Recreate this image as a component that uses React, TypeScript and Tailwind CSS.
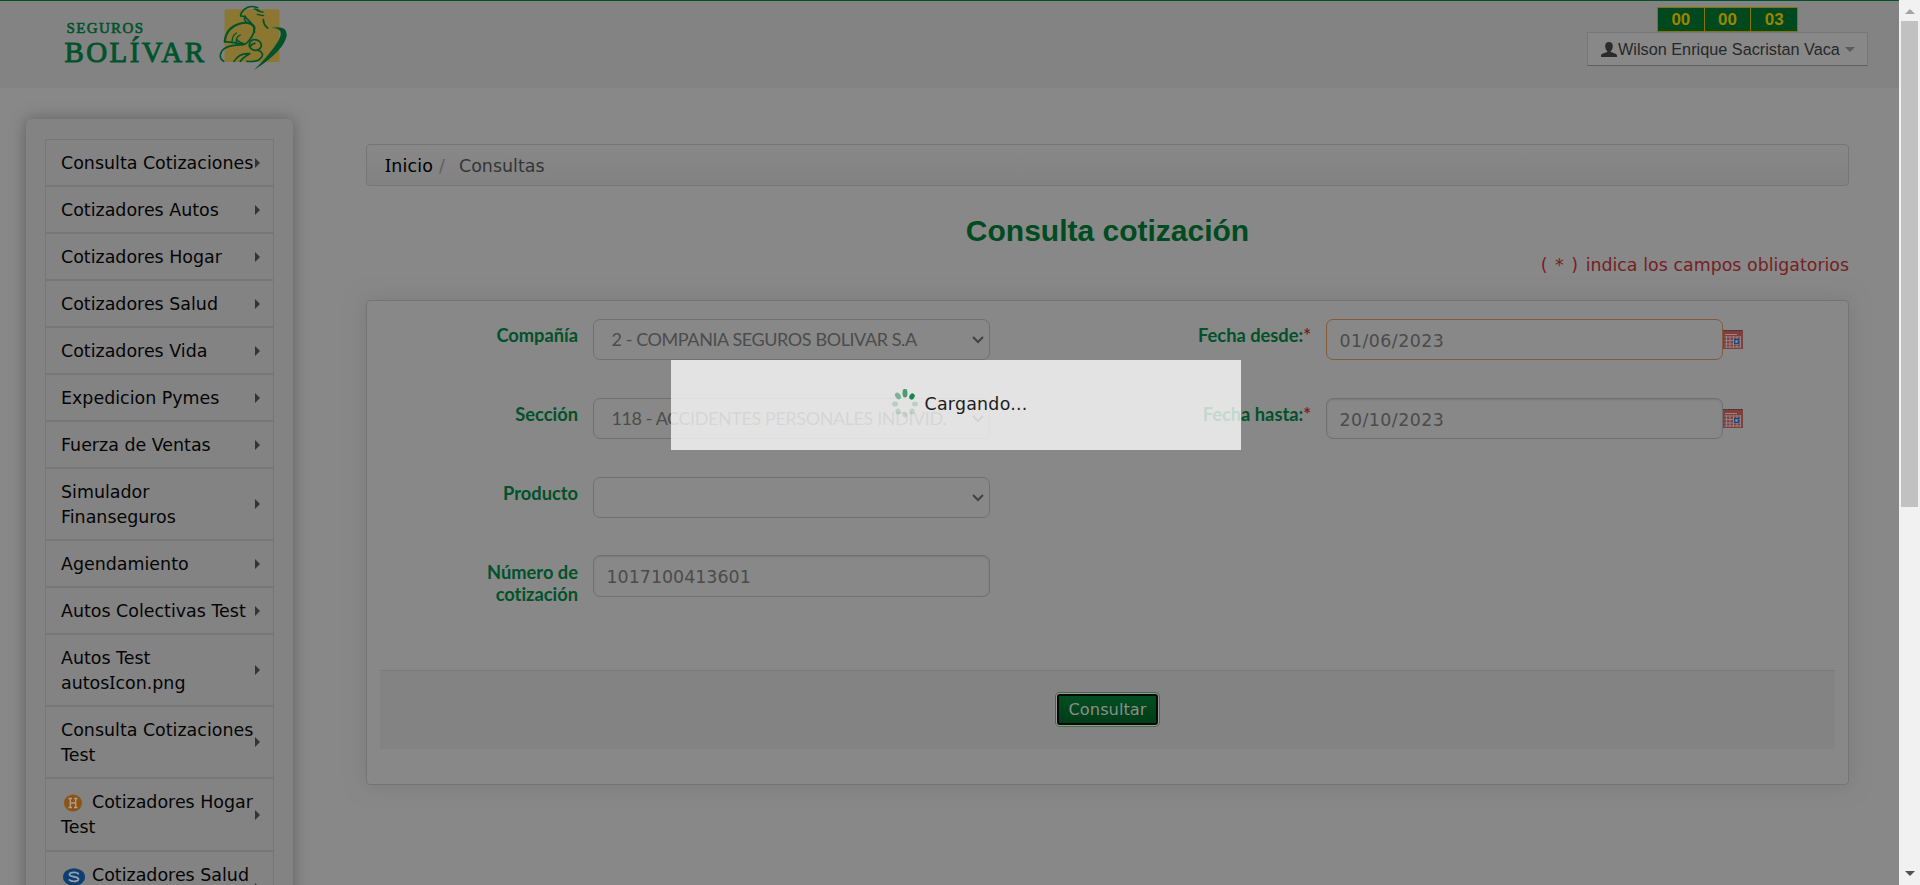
import React from 'react';

const SANS = "font-['DejaVu_Sans','Noto_Sans',sans-serif]";
const ARIAL = "font-['Liberation_Sans',Arial,sans-serif]";
const LATO = "font-['Lato',sans-serif]";

function CapitalI() {
  return <span className="font-['Noto_Sans',sans-serif] text-[18px] leading-none">I</span>;
}

function Logo() {
  return (
    <svg className="block" width="240" height="76" viewBox="0 0 240 76">
      <g fill="#00532b" stroke="#00532b" fontFamily="'Liberation Serif', serif">
        <text x="6.5" y="33.2" fontSize="15" strokeWidth="0.6" textLength="76.500" lengthAdjust="spacing">SEGUROS</text>
        <text x="4.5" y="62" fontSize="29" strokeWidth="0.9" textLength="139.500" lengthAdjust="spacing">BOLÍVAR</text>
      </g>
      <svg x="150" y="0" width="90" height="76" viewBox="0 0 270 228">
        <rect x="44" y="28" width="164" height="158" fill="#8b7732" />
        <g fill="none" stroke="#00532b" strokeWidth="6" strokeLinecap="round" strokeLinejoin="round">
          <path d="M143 23Q118 14 103 28Q91 39 92 48L106 49Q99 60 112 68Q128 72 134 82Q129 92 134 96" strokeWidth="5" />
          <path d="M107 52Q125 68 134 85Q131 110 107 132Q92 131 80 119" strokeWidth="5" />
          <path d="M133 27Q145 28 152 35M141 32Q150 36 159 36M142 43Q151 46 161 47" strokeWidth="4" />
          <path d="M160 59Q161 76 173 84" strokeWidth="5" />
          <path d="M44 125Q48 84 86 72Q118 62 130 77" />
          <path d="M79 99Q67 105 66 127M91 105Q76 111 79 129" strokeWidth="4" />
          <path d="M44 125Q72 127 102 134Q48 134 35 154Q24 174 41 184" strokeWidth="5" />
          <path d="M119 141Q115 125 128 119Q148 117 154 133Q155 148 139 151Q125 151 119 141Q128 130 135 130M145 151Q165 160 153 174Q143 187 111 184M72 184Q88 158 119 161Q100 171 91 184" strokeWidth="5" />
        </g>
        <path d="M182 84Q233 74 230 107Q223 151 131 211Q179 164 203 126Q229 82 182 84Z" fill="#00532b" />
      </svg>
    </svg>
  );
}

function Header() {
  return (
    <header className="flex h-[88px] justify-between border-t border-[#00522b] bg-[#838383]">
      <div className="-mt-px ml-[60px]"><Logo /></div>
      <div className={`mr-[31px] flex w-[281px] flex-col items-center pt-[6px] ${ARIAL}`}>
        <div className="flex h-[25px] w-[141px] divide-x divide-[#887300] border border-[#887300] bg-[#00491f] text-center text-[17px] leading-[23px] font-bold text-[#9a8500]">
          <span className="flex-1">00</span>
          <span className="flex-1">00</span>
          <span className="flex-1">03</span>
        </div>
        <div className="flex h-[34px] w-full items-center border border-[#777] border-b-[#606060] bg-[#888] pl-[13px] text-[16.25px] text-[#272727]">
          <svg width="16" height="15" viewBox="0 0 16 15" fill="#2b2b2b">
            <path d="M8 0C5.600 0 4.200 1.400 4.200 4C4.200 6.400 5 8 6.200 9V10C4 11 0 11.700 0 13.500V15H16V13.500C16 11.700 12 11 9.800 10V9C11 8 11.800 6.400 11.800 4C11.800 1.400 10.400 0 8 0Z" />
          </svg>
          <span className="ml-px pt-px whitespace-nowrap">Wilson Enrique Sacristan Vaca</span>
          <span className="mt-px ml-[5px] border-x-[5px] border-t-[5px] border-x-transparent border-t-[#5b5b5b]" />
        </div>
      </div>
    </header>
  );
}

function HogarIcon() {
  return (
    <svg className="mr-[10px] ml-[3px] inline-block align-[-4px]" width="18" height="18" viewBox="0 0 18 18">
      <ellipse cx="9" cy="9" rx="9" ry="8.600" fill="#8d5314" />
      <path d="M4.500 4.500H8M10 4.500H13.500M4.500 13.500H8M10 13.500H13.500M6.300 4.500V13.500M11.700 4.500V13.500M6.300 9H11.700" stroke="#a9a097" strokeWidth="1.300" fill="none" />
    </svg>
  );
}

function SaludIcon() {
  return (
    <svg className="mr-[7px] ml-[2px] inline-block align-[-5px]" width="22" height="18" viewBox="0 0 22 18">
      <ellipse cx="11" cy="9" rx="11" ry="8.800" fill="#0f3f6e" />
      <path d="M15.500 6.500C15 3.800 6.500 3.600 6.500 6.500C6.500 9.500 15.500 8 15.500 11.200C15.500 14.200 6.800 13.800 6.200 11.200" stroke="#8fa0b0" strokeWidth="1.800" fill="none" />
    </svg>
  );
}

const items: { label: React.ReactNode; size: string }[] = [
  { label: 'Consulta Cotizaciones', size: 'h-[47px]' },
  { label: 'Cotizadores Autos', size: 'h-[47px]' },
  { label: 'Cotizadores Hogar', size: 'h-[47px]' },
  { label: 'Cotizadores Salud', size: 'h-[47px]' },
  { label: 'Cotizadores Vida', size: 'h-[47px]' },
  { label: 'Expedicion Pymes', size: 'h-[47px]' },
  { label: 'Fuerza de Ventas', size: 'h-[47px]' },
  { label: <>Simulador<br />Finanseguros</>, size: 'h-[72px]' },
  { label: 'Agendamiento', size: 'h-[47px]' },
  { label: 'Autos Colectivas Test', size: 'h-[47px]' },
  { label: <>Autos Test<br />autos<CapitalI />con.png</>, size: 'h-[72px]' },
  { label: <>Consulta Cotizaciones<br />Test</>, size: 'h-[72px]' },
  { label: <span className="-mt-px block"><HogarIcon />Cotizadores Hogar<br />Test</span>, size: 'h-[73px]' },
  { label: <span className="-mt-[2px] block"><SaludIcon />Cotizadores Salud<br />&nbsp;</span>, size: 'h-[73px]' },
];

function Sidebar() {
  return (
    <aside className="mt-[31px] ml-[26px] w-[267px] shrink-0 self-start rounded-[6px] bg-[#838383] px-[19px] pt-[20px] pb-[20px] shadow-[0_0_15px_#606060]">
      {items.map((item, i) => (
        <div key={i} className={`flex items-center border border-[#777] pl-[15px] ${item.size}`}>
          <span className="w-[194px] shrink-0 pt-[2px] text-[17.45px] leading-[25px] whitespace-nowrap text-[#050505]">{item.label}</span>
          <span className="border-y-[5px] border-l-[5px] border-y-transparent border-l-[#343434]" />
        </div>
      ))}
    </aside>
  );
}

function Label({ text, required, wide }: { text: React.ReactNode; required?: boolean; wide?: boolean }) {
  return (
    <label className={`${wide ? 'w-[321px]' : 'w-[211px]'} mt-[5px] shrink-0 text-right text-[18.3px] leading-[22px] font-bold text-[#00522a] [font-variant-ligatures:none] ${LATO}`}>
      {text}
      {required && <span className="text-[#7d2024]">*</span>}
    </label>
  );
}

function Select({ value }: { value?: string }) {
  return (
    <div className={`ml-[15px] flex h-[41px] w-[397px] shrink-0 items-center justify-between rounded-[7px] border border-[#707070] pr-[5px] pl-[17.5px] text-[18px] tracking-[-0.41px] text-[#4c4c4c] ${LATO}`}>
      <span className="mb-px whitespace-nowrap">{value}</span>
      <svg width="12" height="8" viewBox="0 0 12 8" fill="none" stroke="#424242" strokeWidth="2">
        <path d="M1 1L6 6L11 1" />
      </svg>
    </div>
  );
}

function Calendar() {
  return (
    <svg className="mt-[11px] shrink-0" width="20" height="19" viewBox="0 0 20 19">
      <rect width="20" height="19" fill="#7e3f3d" />
      <path d="M0 .5H20" stroke="#333" strokeDasharray="1.500 1" />
      <path d="M2 4.500H14" stroke="#a9807e" />
      <path d="M1.500 7H18M1.500 10.500H18M1.500 14H18M1.500 17H18M3.500 6V18M7 6V18M10.500 6V18M14 6V18M17.500 6V18" stroke="#938083" strokeWidth="1.100" />
      <rect x="11.700" y="9.700" width="3.600" height="3.600" fill="#8b9dad" stroke="#174684" strokeWidth="1.300" />
    </svg>
  );
}

function DateField({ value, highlighted }: { value: string; highlighted?: boolean }) {
  return (
    <>
      <div className={`ml-[15px] h-[41px] w-[397px] shrink-0 rounded-[7px] border pt-[2px] pl-[12.5px] text-[17.4px] leading-[39px] tracking-[0.45px] text-[#4b4b4b] ${highlighted ? 'border-[#825b3c]' : 'border-[#707070] shadow-[inset_0_1px_2px_#797979]'}`}>{value}</div>
      <Calendar />
    </>
  );
}

function Form() {
  return (
    <section className="mt-[21px] h-[485px] rounded-[4px] border border-[#747474] pt-[18px] shadow-[0_0_20px_#7a7a7a]">
      <div className="flex h-[79px] items-start">
        <Label text="Compañía" />
        <Select value="2 - COMPANIA SEGUROS BOLIVAR S.A" />
        <Label text="Fecha desde:" required wide />
        <DateField value="01/06/2023" highlighted />
      </div>
      <div className="flex h-[79px] items-start">
        <Label text="Sección" />
        <Select value="118 - ACCIDENTES PERSONALES INDIVID." />
        <Label text="Fecha hasta:" required wide />
        <DateField value="20/10/2023" />
      </div>
      <div className="flex h-[79px] items-start">
        <Label text="Producto" />
        <Select />
      </div>
      <div className="flex h-[79px] items-start">
        <Label text={<>Número de<br />cotización</>} />
        <div className="-mt-px ml-[15px] h-[42px] w-[397px] rounded-[7px] border border-[#707070] pt-px pl-[12.5px] text-[17.45px] leading-[41px] text-[#4b4b4b] shadow-[inset_0_1px_2px_#797979]">1017100413601</div>
      </div>
      <div className="mx-[13px] mt-[35px] flex h-[79px] justify-center border-t border-[#7a7a7a] bg-[#838383] pt-[23px]">
        <button className="h-[31px] w-[101px] rounded-[3px] border-2 border-[#080808] bg-linear-to-b from-[#004f20] to-[#003d18] text-[16.3px] leading-[26px] text-[#8c8c8c] shadow-[0_0_0_1px_#999,0_0_0_2px_#3d703d]">Consultar</button>
      </div>
    </section>
  );
}

function Spinner() {
  return (
    <svg width="28" height="30" viewBox="-14 -15 28 30" fill="#18864a">
      <ellipse cx="0" cy="-11" rx="2.500" ry="4.500" opacity=".75" />
      <ellipse cx="7" cy="-7.500" rx="2.500" ry="3.200" transform="rotate(30 7 -7.500)" />
      <ellipse cx="10" cy="0" rx="3" ry="2.500" opacity=".2" />
      <ellipse cx="7" cy="7.500" rx="2.500" ry="3" opacity=".18" />
      <ellipse cx="0" cy="10.500" rx="2.500" ry="3" opacity=".15" />
      <ellipse cx="-7" cy="7.500" rx="2.500" ry="3" opacity=".2" />
      <ellipse cx="-10" cy="0" rx="3" ry="2.500" opacity=".22" />
      <ellipse cx="-7" cy="-8" rx="2.500" ry="3.700" transform="rotate(-35 -7 -8)" opacity=".5" />
    </svg>
  );
}

function Scrollbar() {
  return (
    <div className="flex w-[21px] shrink-0 flex-col items-center bg-[#f1f1f1]">
      <span className="mt-[9px] border-x-[5px] border-b-[5px] border-x-transparent border-b-[#a3a3a3]" />
      <span className="mt-[7px] h-[486px] w-[17px] bg-[#c1c1c1]" />
      <span className="mt-auto mb-[9px] border-x-[5px] border-t-[5px] border-x-transparent border-t-[#505050]" />
    </div>
  );
}

export default function App() {
  return (
    <div className={`relative flex h-[885px] w-[1920px] overflow-hidden bg-[#888] ${SANS}`}>
      <div className="min-w-0 flex-1 overflow-hidden">
        <Header />
        <div className="flex">
          <Sidebar />
          <main className="mt-[56px] ml-[73px] w-[1483px]">
            <nav className="flex h-[42px] rounded-[4px] border border-[#757575] bg-linear-to-b from-[#888] to-[#828282] pt-px pl-[18px] text-[17.45px] leading-[41px]">
              <span className="w-[54px] tracking-[0.15px] whitespace-nowrap text-black"><CapitalI />nicio</span>
              <span className="w-[20px] text-[#606060]">/</span>
              <span className="text-[#353535]">Consultas</span>
            </nav>
            <h1 className={`mt-[25px] h-[40px] text-center text-[30px] leading-[40px] font-bold text-[#004b1f] ${ARIAL}`}>Consulta cotización</h1>
            <p className="text-right text-[17.35px] leading-[28px] text-[#742024] [word-spacing:0.3px]"><span className="tracking-[0.9px]">( * ) </span>indica los campos obligatorios</p>
            <Form />
          </main>
        </div>
      </div>
      <Scrollbar />
      <div className="absolute top-[360px] left-[671px] flex h-[90px] w-[570px] bg-white/77 pt-[29px] pl-[220px] text-[17.4px] leading-[30px] tracking-[0.25px] text-[#1c1c1c]">
        <Spinner />
        <span className="ml-[5.5px]">Cargando...</span>
      </div>
    </div>
  );
}
